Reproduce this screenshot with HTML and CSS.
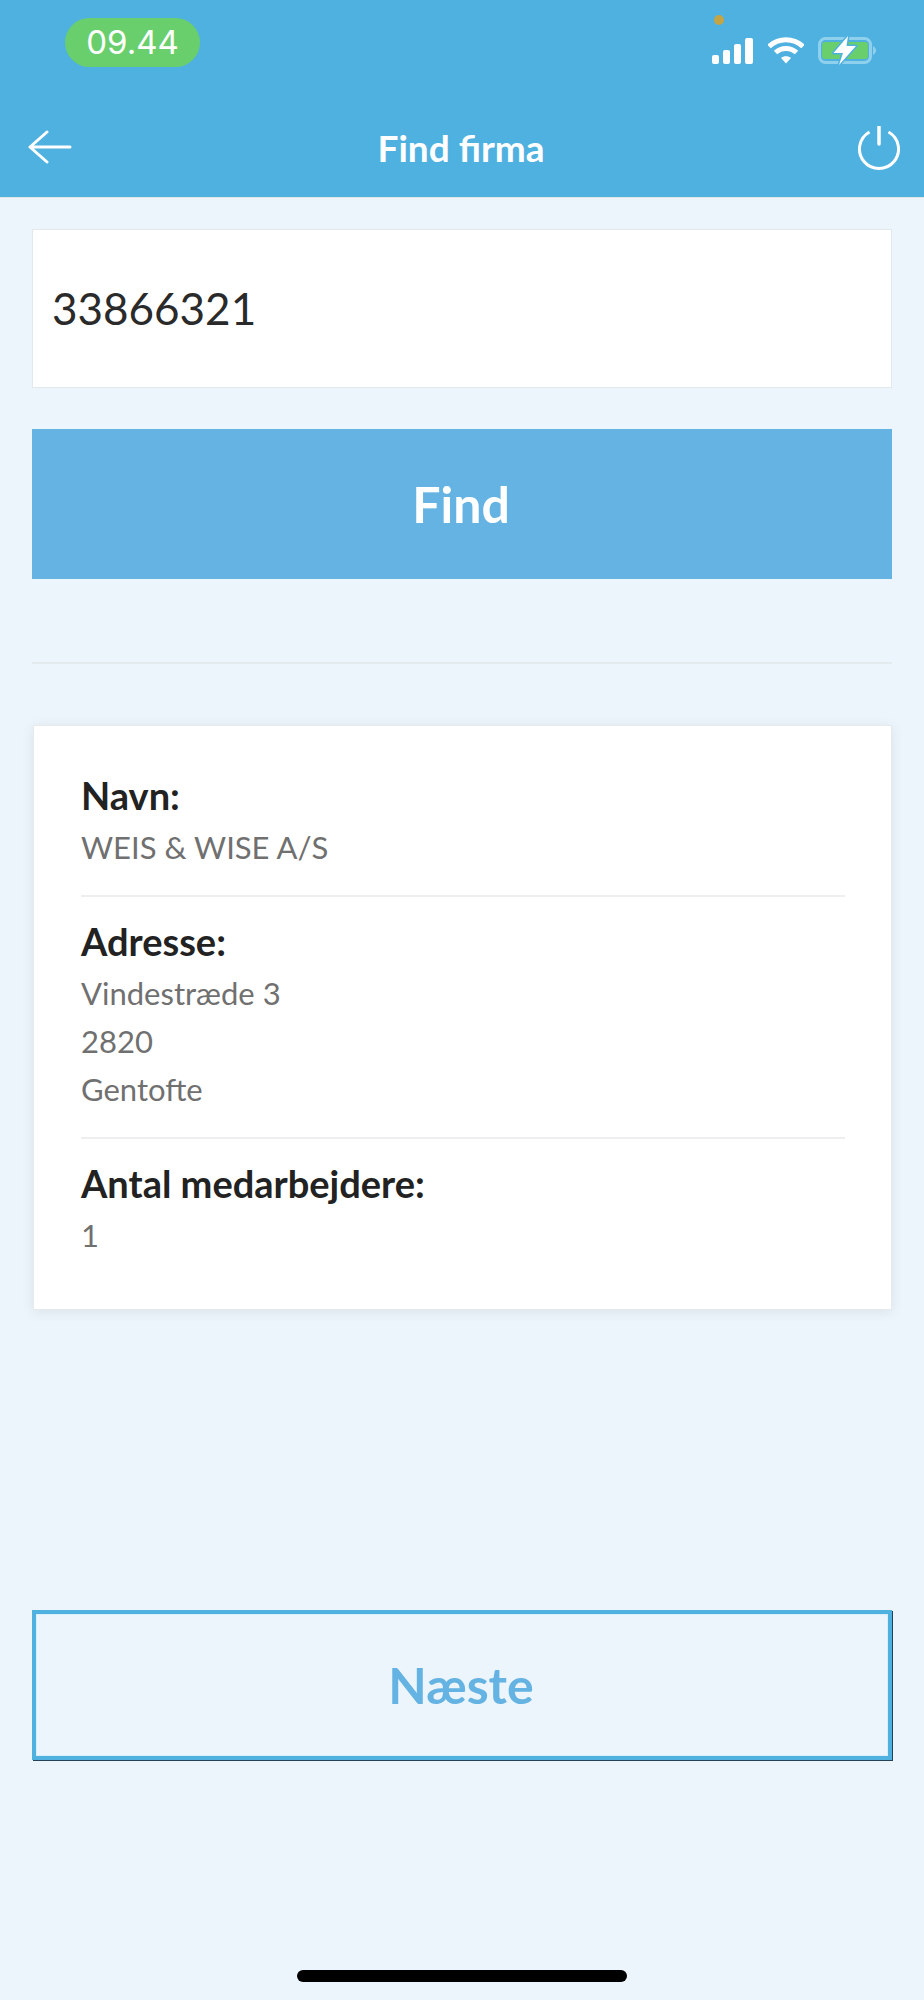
FILE: index.html
```html
<!DOCTYPE html>
<html lang="da">
<head>
    <meta charset="UTF-8">
    <meta name="viewport" content="width=device-width, initial-scale=1.0">
    <title>Find firma</title>
    <link rel="stylesheet" href="styles.css">
</head>
<body>

<div class="screen">
    <header class="top-bar">
        <div class="status-bar">
            <div class="time-pill">09.44</div>
            <div class="status-icons">
                <span class="privacy-dot"></span>
                <svg class="signal" width="41" height="26" viewBox="0 0 41 26">
                    <rect x="0" y="17" width="7" height="9" rx="2"/>
                    <rect x="11" y="12" width="7" height="14" rx="2"/>
                    <rect x="22" y="6" width="7" height="20" rx="2"/>
                    <rect x="33" y="0" width="8" height="26" rx="2"/>
                </svg>
                <svg class="wifi" width="36" height="27" viewBox="0 0 36 27">
                    <path d="M1 9.5C10.500 0.500 25.500 0.500 35 9.500" fill="none" stroke="#fff" stroke-width="5"/>
                    <path d="M7.500 15.500C13.500 10 22.500 10 28.500 15.500" fill="none" stroke="#fff" stroke-width="5"/>
                    <path d="M13 21C15.500 18.500 20.500 18.500 23 21L18 26.500Z" fill="#fff"/>
                </svg>
                <svg class="battery" width="59" height="31" viewBox="0 0 59 31">
                    <rect x="2.500" y="3.500" width="51" height="24" rx="6" fill="none" stroke="#8fd0ec" stroke-width="3"/>
                    <rect x="5" y="7" width="46" height="17" rx="3" fill="#69cf6d"/>
                    <path d="M56 11C58 12 59 14 59 15.500C59 17 58 19 56 20Z" fill="#8fd0ec"/>
                    <path d="M31 1L16.500 18H26L22 30L39 11H29.500Z" fill="#fff" stroke="#4fb1e0" stroke-width="3" stroke-linejoin="round" paint-order="stroke"/>
                </svg>
            </div>
        </div>
        <div class="nav-bar">
            <svg class="icon-back" width="44" height="36" viewBox="0 0 44 36">
                <path d="M19 3L2 18L19 33M2 18H42" fill="none" stroke="#fff" stroke-width="3" stroke-linecap="round" stroke-linejoin="round"/>
            </svg>
            <h1>Find firma</h1>
            <svg class="icon-power" width="44" height="48" viewBox="0 0 44 48">
                <path d="M12.500 6A19.500 19.500 0 1 0 31.500 6" fill="none" stroke="#fff" stroke-width="3"/>
                <path d="M22 1V18" fill="none" stroke="#fff" stroke-width="3.500" stroke-linecap="round"/>
            </svg>
        </div>
    </header>

    <main class="content">
        <div class="search-input">33866321</div>
        <button class="btn btn-solid">Find</button>
        <hr class="divider">

        <section class="company-card">
            <div class="field">
                <div class="field-label">Navn:</div>
                <div class="field-value">WEIS &amp; WISE A/S</div>
            </div>
            <div class="field">
                <div class="field-label">Adresse:</div>
                <div class="field-value">Vindestræde 3</div>
                <div class="field-value">2820</div>
                <div class="field-value">Gentofte</div>
            </div>
            <div class="field">
                <div class="field-label">Antal medarbejdere:</div>
                <div class="field-value">1</div>
            </div>
        </section>

        <button class="btn btn-outline">Næste</button>
    </main>

    <div class="home-indicator"></div>
</div>

</body>
</html>
```

FILE: styles.css
```css
* {
    box-sizing: border-box;
}
html, body {
    margin: 0;
    padding: 0;
}
body {
    font-family: 'Lato', 'Liberation Sans', sans-serif;
    background-color: #edf5fc;
}
.screen {
    width: 924px;
    height: 2000px;
    display: flex;
    flex-direction: column;
}
.top-bar {
    height: 198px;
    background-color: #4fb1e0;
    border-bottom: 1px solid #dfe6ea;
    color: #fff;
}
.status-bar {
    height: 106px;
    display: flex;
    justify-content: space-between;
    align-items: flex-start;
    padding: 18px 48px 0 65px;
}
.time-pill {
    width: 135px;
    height: 49px;
    border-radius: 25px;
    background-color: #69cf6d;
    font-family: 'Inter', 'Liberation Sans', sans-serif;
    font-size: 33px;
    line-height: 49px;
    text-align: center;
}
.status-icons {
    position: relative;
    display: flex;
    align-items: center;
    gap: 15px;
    margin-top: 17px;
}
.status-icons svg {
    display: block;
    fill: #fff;
}
.status-icons .battery {
    margin-left: -2px;
}
.privacy-dot {
    position: absolute;
    left: 2px;
    top: -20px;
    width: 10px;
    height: 10px;
    border-radius: 50%;
    background-color: #c4a444;
}
.nav-bar {
    display: flex;
    justify-content: space-between;
    align-items: center;
    padding: 0 23px 0 28px;
    height: 88px;
}
.icon-back {
    margin-bottom: 6px;
}
.nav-bar h1 {
    margin: -5px 7px 0 0;
    font-size: 37px;
    font-weight: 700;
    color: #fff;
}
.content {
    flex: 1;
    padding: 31px 32px 0;
    display: flex;
    flex-direction: column;
}
.search-input {
    height: 159px;
    background-color: #fff;
    border: 1px solid #e3e8ea;
    padding: 0 19px;
    font-size: 44px;
    line-height: 157px;
    color: #2a2a2a;
}
.btn {
    width: 100%;
    height: 150px;
    padding: 0 2px 0 0;
    font-family: inherit;
    font-size: 50px;
    font-weight: 700;
    cursor: pointer;
    border-radius: 0;
}
.btn-solid {
    margin-top: 41px;
    border: none;
    background-color: #65b3e2;
    color: #fff;
}
.divider {
    margin: 83px 0 0;
    border: none;
    border-top: 2px solid #e4ebee;
}
.company-card {
    margin: 61px 0 0 1px;
    height: 585px;
    background-color: #fff;
    border: 1px solid #e6eaec;
    box-shadow: 0 2px 12px rgba(0, 0, 0, 0.08);
    padding: 46px 46px 0 47px;
}
.field {
    padding-bottom: 24px;
    margin-bottom: 21px;
    border-bottom: 2px solid #eceeef;
}
.field:last-child {
    border-bottom: none;
}
.field-label {
    margin-bottom: 5px;
    font-size: 38px;
    line-height: 46px;
    font-weight: 700;
    color: #222;
}
.field-value {
    font-size: 31px;
    line-height: 48px;
    font-weight: 400;
    color: #707070;
}
.btn-outline {
    margin-top: 300px;
    background-color: #edf5fc;
    border: 4px solid #4fb1e0;
    box-shadow: inset 0 0 0 1px #d8eef9, 1px 1px 0 #24435a;
    color: #65b3e2;
}
.home-indicator {
    align-self: center;
    width: 330px;
    height: 12px;
    margin-bottom: 18px;
    border-radius: 6px;
    background-color: #000;
}
```
